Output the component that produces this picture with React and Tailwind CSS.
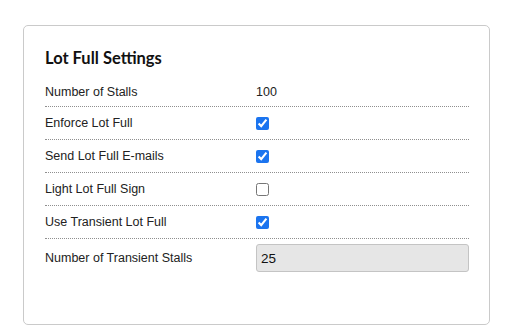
export default function App() {
  const rows = [
    { label: 'Number of Stalls', value: '100' },
    { label: 'Enforce Lot Full', checked: true },
    { label: 'Send Lot Full E-mails', checked: true },
    { label: 'Light Lot Full Sign', checked: false },
    { label: 'Use Transient Lot Full', checked: true },
  ]

  return (
    <div className="min-h-[332px] bg-white pt-[25px] pl-[23px] font-['Liberation_Sans',Arial,sans-serif] text-[#222]">
      <div className="w-[467px] h-[300px] border border-[#cacaca] rounded-[5px] pl-[21px] pr-[20px] pt-[20px]">
        <h2 className="font-['Lato',sans-serif] font-bold text-[16.5px] leading-[24px] text-[#111] mb-[4px]">
          Lot Full Settings
        </h2>
        {rows.map((r, i) => (
          <div key={r.label} className={`grid grid-cols-[211px_1fr] items-center h-[33px] border-b border-dotted border-[#8f8f8f] text-[12.5px] ${i === 0 ? 'pt-[4px]' : 'pt-[1px]'}`}>
            <span>{r.label}</span>
            {r.value !== undefined
              ? <span>{r.value}</span>
              : <span className="flex items-center">
                  <input type="checkbox" defaultChecked={r.checked} className="w-[13px] h-[13px] m-0 accent-[#1b74ef]" />
                </span>}
          </div>
        ))}
        <div className="grid grid-cols-[211px_1fr] items-center py-[5px] text-[12.5px]">
          <span>Number of Transient Stalls</span>
          <input
            type="text"
            defaultValue="25"
            readOnly
            className="w-full h-[28px] bg-[#e6e6e6] border border-[#c4c4c4] rounded-[3px] px-[4px] text-[13.5px] text-[#111] outline-none"
          />
        </div>
      </div>
    </div>
  )
}
